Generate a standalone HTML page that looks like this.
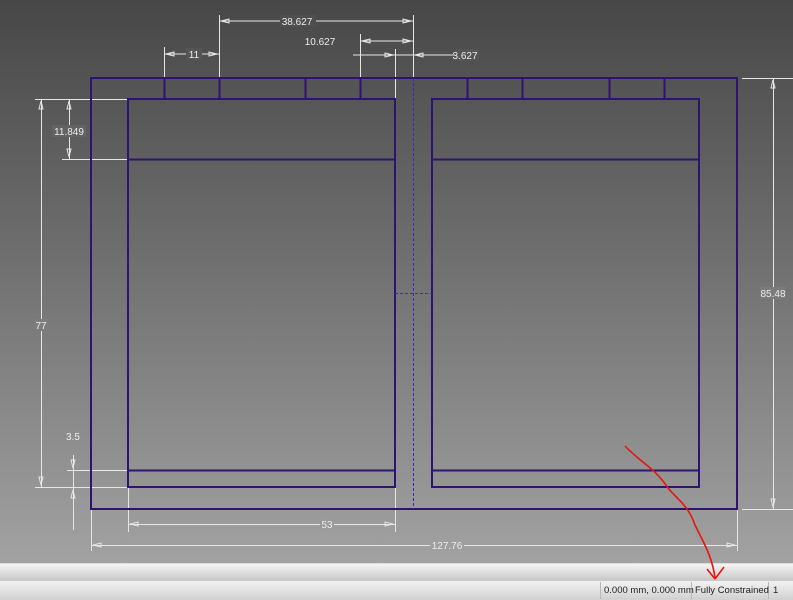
<!DOCTYPE html>
<html><head><meta charset="utf-8"><style>
html,body{margin:0;padding:0;width:793px;height:600px;overflow:hidden}
body{background:linear-gradient(#474747 0px,#6e6e6e 250px,#a2a2a2 563px);position:relative;font-family:"Liberation Sans",sans-serif}
svg{position:absolute;left:0;top:0;z-index:2}
.b1{position:absolute;left:0;top:563px;width:793px;height:18px;background:linear-gradient(#f4f4f4,#c4c4c4);border-top:1px solid #ddd}
.b2{position:absolute;left:0;top:581px;width:793px;height:19px;background:linear-gradient(#f2f2f2,#d0d0d0)}
.b2 span{position:absolute;top:4px;font-size:9.5px;color:#222;white-space:nowrap}
.sep{position:absolute;top:1px;width:1px;height:17px;background:#b8b8b8}
</style></head><body>
<div class="b1"></div>
<div class="b2">
<div class="sep" style="left:600px"></div><div class="sep" style="left:691px"></div><div class="sep" style="left:768px"></div>
<span style="left:604px">0.000 mm, 0.000 mm</span>
<span style="left:695px">Fully Constrained</span>
<span style="left:773px">1</span>
</div>
<svg width="793" height="600" viewBox="0 0 793 600">
<g stroke="#e6e6e6" stroke-width="1" fill="none">
<path d="M219.5 15V78M413.5 15V78M360.5 34V78M164.5 47V78M395.5 49V99M353 55H455"/>
<path d="M219 21H413M360 41H413M164 54H219"/>
<path d="M35 99.5H128M62 159.5H128M35 487.5H128M67 470.5H128"/>
<path d="M41.5 99V487M69.5 99V159M73.5 455V530"/>
<path d="M128.5 487V532M395.5 487V532M91.5 509V551M737.5 509V551"/>
<path d="M128 524.5H395M91 545.5H737"/>
<path d="M742 78.5H793M742 509.5H793M773.5 78V509"/>
</g>
<g>
<rect x="280" y="15" width="36" height="12" fill="#4f4f4f"/><rect x="339" y="35" width="0" height="12" fill="#535353"/>
<rect x="186" y="48" width="16" height="12" fill="#555"/><rect x="455" y="49" width="24" height="12" fill="#555"/>
<rect x="52" y="125" width="34" height="12" fill="#636363"/><rect x="34" y="319" width="14" height="12" fill="#7d7d7d"/>
<rect x="66" y="430" width="14" height="12" fill="#8e8e8e"/><rect x="320" y="518" width="14" height="12" fill="#9b9b9b"/>
<rect x="430" y="539" width="34" height="12" fill="#9f9f9f"/><rect x="760" y="287" width="26" height="12" fill="#7b7b7b"/>
</g>
<g fill="#ececec" font-size="10" font-family="Liberation Sans,sans-serif" text-anchor="middle">
<text x="297" y="25">38.627</text><text x="320" y="45">10.627</text>
<text x="194" y="58">11</text><text x="465" y="59">3.627</text>
<text x="69" y="135">11.849</text><text x="41" y="329">77</text>
<text x="73" y="440">3.5</text><text x="327" y="528">53</text>
<text x="447" y="549">127.76</text><text x="773" y="297">85.48</text>
</g>
<g fill="none" stroke="#e6e6e6" stroke-width="1">
<path d="M221 21l8-2v4zM411 21l-8-2v4zM362 41l8-2v4zM411 41l-8-2v4zM166 54l8-2v4zM217 54l-8-2v4zM393 55l-8-2v4zM415 55l8-2v4z"/>
<path d="M41 101l-2 8h4zM69 101l-2 8h4zM69 157l-2-8h4zM41 485l-2-8h4zM73 468l-2-8h4zM73 490l-2 8h4z"/>
<path d="M130 524l8-2v4zM393 524l-8-2v4zM93 545l8-2v4zM735 545l-8-2v4zM773 80l-2 8h4zM773 507l-2-8h4z"/>
</g>
<g fill="none" stroke="#2e1470" stroke-width="2">
<rect x="91" y="78" width="646" height="431"/>
<rect x="128" y="99" width="267" height="388"/>
<rect x="432" y="99" width="267" height="388"/>
<path d="M128 159.5H395M128 470.5H395M432 159.5H699M432 470.5H699"/>
<path d="M164.5 78V99M219.5 78V99M305.5 78V99M360.5 78V99M467.5 78V99M522.5 78V99M609.5 78V99M664.5 78V99"/>
</g>
<g stroke="#3a28c0" stroke-width="1" stroke-dasharray="3,2" fill="none">
<path d="M413.5 78V509M395 293.5H432"/>
</g>
<g stroke="#e8140c" stroke-width="1.6" fill="none">
<path d="M625 446C640 462 655 468 668 488C678 500 688 505 695 525C702 540 712 555 715 578"/>
<path d="M715 579L724 567M715 579L707 569"/>
</g>
</svg>
</body></html>
